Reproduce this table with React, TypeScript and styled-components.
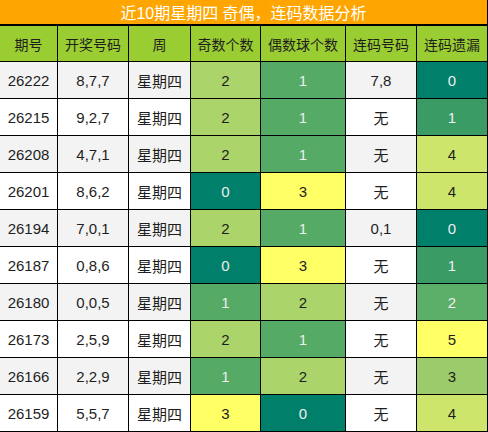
import React from "react";
import styled, { createGlobalStyle } from "styled-components";

const Global = createGlobalStyle`
  html, body { margin: 0; padding: 0; background: #fff; }
  body { font-family: "Liberation Sans", "Noto Sans CJK SC", sans-serif; }
`;

const Frame = styled.div`
  width: 488px;
  box-sizing: border-box;
  background: #000;
  padding: 0 1px 1px 0;
  display: flex;
  flex-direction: column;
  gap: 2px;
`;

const Title = styled.div`
  height: 24px;
  background: #ffa500;
  color: #fff;
  font-size: 16px;
  display: flex;
  align-items: center;
  justify-content: center;
  white-space: pre;
`;

const Grid = styled.div`
  display: grid;
  grid-template-columns: 57px 70px 61px 69px 84px 70px 70px;
  grid-template-rows: 35px;
  grid-auto-rows: 36px;
  gap: 1px;
`;

const Head = styled.div`
  background: #9acd32;
  color: #1e1e1e;
  font-size: 14px;
  display: flex;
  align-items: center;
  justify-content: center;
  white-space: nowrap;
`;

const Cell = styled.div<{ $bg: string; $fg?: string }>`
  background: ${(p) => p.$bg};
  color: ${(p) => p.$fg || "#1e1e1e"};
  font-size: 15px;
  display: flex;
  align-items: center;
  justify-content: center;
  white-space: nowrap;
`;

const countScale: Record<number, [string, string]> = {
  0: ["#00806a", "#eeeeee"],
  1: ["#55aa66", "#eeeeee"],
  2: ["#abd56a", "#1e1e1e"],
  3: ["#ffff66", "#1e1e1e"],
};

const missScale: Record<number, [string, string]> = {
  0: ["#00806a", "#eeeeee"],
  1: ["#3a9b64", "#eeeeee"],
  2: ["#5baf68", "#eeeeee"],
  3: ["#9bcb6a", "#1e1e1e"],
  4: ["#cce56a", "#1e1e1e"],
  5: ["#ffff66", "#1e1e1e"],
};

type Row = [string, string, number, number, string, number];

const rows: Row[] = [
  ["26222", "8,7,7", 2, 1, "7,8", 0],
  ["26215", "9,2,7", 2, 1, "无", 1],
  ["26208", "4,7,1", 2, 1, "无", 4],
  ["26201", "8,6,2", 0, 3, "无", 4],
  ["26194", "7,0,1", 2, 1, "0,1", 0],
  ["26187", "0,8,6", 0, 3, "无", 1],
  ["26180", "0,0,5", 1, 2, "无", 2],
  ["26173", "2,5,9", 2, 1, "无", 5],
  ["26166", "2,2,9", 1, 2, "无", 3],
  ["26159", "5,5,7", 3, 0, "无", 4],
];

const heads = ["期号", "开奖号码", "周", "奇数个数", "偶数球个数", "连码号码", "连码遗漏"];

export default function App() {
  return (
    <>
      <Global />
      <Frame>
        <Title>近10期星期四 奇偶，连码数据分析</Title>
        <Grid>
          {heads.map((h) => (
            <Head key={h}>{h}</Head>
          ))}
          {rows.map((r, i) => {
            const base = i % 2 === 0 ? "#f3f3f3" : "#ffffff";
            const [ob, of] = countScale[r[2]];
            const [eb, ef] = countScale[r[3]];
            const [mb, mf] = missScale[r[5]];
            return (
              <React.Fragment key={r[0]}>
                <Cell $bg={base}>{r[0]}</Cell>
                <Cell $bg={base}>{r[1]}</Cell>
                <Cell $bg={base}>星期四</Cell>
                <Cell $bg={ob} $fg={of}>{r[2]}</Cell>
                <Cell $bg={eb} $fg={ef}>{r[3]}</Cell>
                <Cell $bg={base}>{r[4]}</Cell>
                <Cell $bg={mb} $fg={mf}>{r[5]}</Cell>
              </React.Fragment>
            );
          })}
        </Grid>
      </Frame>
    </>
  );
}
